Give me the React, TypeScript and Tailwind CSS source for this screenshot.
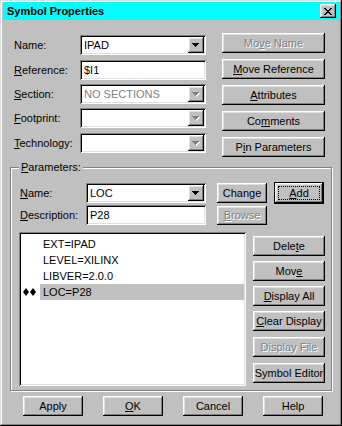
import type { ReactNode } from "react"

const raised =
  "shadow-[inset_-1px_-1px_#000,inset_1px_1px_#fff,inset_-2px_-2px_#808080,inset_2px_2px_#dfdfdf]"
const sunken =
  "shadow-[inset_1px_1px_#808080,inset_-1px_-1px_#fff,inset_2px_2px_#000,inset_-2px_-2px_#dfdfdf]"
const dim = "text-[#808080] [text-shadow:1px_1px_0_#fff]"

function U({ children }: { children: ReactNode }) {
  return <span className="underline underline-offset-[1px] decoration-1">{children}</span>
}

function Btn({
  children,
  className = "",
  disabled = false,
  isDefault = false,
}: {
  children: ReactNode
  className?: string
  disabled?: boolean
  isDefault?: boolean
}) {
  if (isDefault) {
    return (
      <div className={`border border-black ${className}`}>
        <div className={`h-full w-full ${raised} p-[3px]`}>
          <div className="flex h-full w-full items-center justify-center border border-dotted border-black">
            {children}
          </div>
        </div>
      </div>
    )
  }
  return (
    <div className={`flex items-center justify-center ${raised} ${disabled ? dim : ""} ${className}`}>
      {children}
    </div>
  )
}

function Arrow({ disabled = false }: { disabled?: boolean }) {
  return (
    <div className={`flex h-[16px] w-[16px] shrink-0 items-center justify-center bg-[#c0c0c0] ${raised}`}>
      <svg width="8" height="5" viewBox="0 0 8 5" shapeRendering="crispEdges">
        {disabled && (
          <g fill="#fff">
            <rect x="1" y="1" width="7" height="1" />
            <rect x="2" y="2" width="5" height="1" />
            <rect x="3" y="3" width="3" height="1" />
            <rect x="4" y="4" width="1" height="1" />
          </g>
        )}
        <g fill={disabled ? "#808080" : "#000"}>
          <rect x="0" y="0" width="7" height="1" />
          <rect x="1" y="1" width="5" height="1" />
          <rect x="2" y="2" width="3" height="1" />
          <rect x="3" y="3" width="1" height="1" />
        </g>
      </svg>
    </div>
  )
}

function Combo({
  value = "",
  disabled = false,
  className = "",
}: {
  value?: string
  disabled?: boolean
  className?: string
}) {
  return (
    <div className={`flex h-[20px] items-center bg-white p-[2px] ${sunken} ${className}`}>
      <span className={`flex-1 pl-[2px] ${disabled ? "text-[#808080]" : ""}`}>{value}</span>
      <Arrow disabled={disabled} />
    </div>
  )
}

function Field({ value, className = "" }: { value: string; className?: string }) {
  return (
    <div className={`flex h-[20px] items-center bg-white pl-[4px] ${sunken} ${className}`}>
      {value}
    </div>
  )
}

// two black "marked" diamonds in front of the selected parameter
function Marks() {
  return (
    <svg width="14" height="8" viewBox="0 0 14 8" fill="#000">
      <path d="M3 0 L6 4 L3 8 L0 4 Z" />
      <path d="M10 0 L13 4 L10 8 L7 4 Z" />
    </svg>
  )
}

const params = ["EXT=IPAD", "LEVEL=XILINX", "LIBVER=2.0.0", "LOC=P28"]

export default function App() {
  return (
    <div
      className="flex h-[426px] w-[342px] flex-col bg-[#c0c0c0] p-[2px] text-[11px] leading-none text-black shadow-[inset_-1px_-1px_#000,inset_1px_1px_#dfdfdf,inset_-2px_-2px_#808080,inset_2px_2px_#fff] font-['Liberation_Sans',Arial,sans-serif]"
    >
      {/* title bar */}
      <div className="mx-[1px] flex h-[18px] items-center justify-between bg-[#00ffff] pl-[4px] pr-[3px]">
        <span className="text-[11px] font-bold">Symbol Properties</span>
        <div className={`flex h-[14px] w-[16px] items-center justify-center bg-[#c0c0c0] ${raised}`}>
          <svg width="8" height="7" viewBox="0 0 8 7" shapeRendering="crispEdges" fill="#000">
            <rect x="0" y="0" width="2" height="1" />
            <rect x="6" y="0" width="2" height="1" />
            <rect x="1" y="1" width="2" height="1" />
            <rect x="5" y="1" width="2" height="1" />
            <rect x="2" y="2" width="4" height="1" />
            <rect x="3" y="3" width="2" height="1" />
            <rect x="2" y="4" width="4" height="1" />
            <rect x="1" y="5" width="2" height="1" />
            <rect x="5" y="5" width="2" height="1" />
            <rect x="0" y="6" width="2" height="1" />
            <rect x="6" y="6" width="2" height="1" />
          </svg>
        </div>
      </div>

      {/* top section */}
      <div className="mt-[13px] flex">
        <div className="ml-[12px] flex w-[192px] flex-col pt-[2px]">
          <div className="flex h-[20px] items-center">
            <span className="w-[66px]">Name:</span>
            <Combo value="IPAD" className="w-[126px]" />
          </div>
          <div className="mt-[5px] flex h-[20px] items-center">
            <span className="w-[66px]">
              <U>R</U>eference:
            </span>
            <Field value="$I1" className="w-[126px]" />
          </div>
          <div className="mt-[4px] flex h-[20px] items-center">
            <span className="w-[66px]">
              <U>S</U>ection:
            </span>
            <Combo value="NO SECTIONS" disabled className="w-[126px]" />
          </div>
          <div className="mt-[4px] flex h-[20px] items-center">
            <span className="w-[66px]">
              <U>F</U>ootprint:
            </span>
            <Combo disabled className="w-[126px]" />
          </div>
          <div className="mt-[5px] flex h-[20px] items-center">
            <span className="w-[66px]">
              <U>T</U>echnology:
            </span>
            <Combo disabled className="w-[126px]" />
          </div>
        </div>
        <div className="ml-[16px] flex flex-col gap-[6px]">
          <Btn disabled className="h-[20px] w-[103px]">
            Mo<U>v</U>e Name
          </Btn>
          <Btn className="h-[20px] w-[103px]">
            <U>M</U>ove Reference
          </Btn>
          <Btn className="h-[20px] w-[103px]">
            <U>A</U>ttributes
          </Btn>
          <Btn className="h-[20px] w-[103px]">
            Co<U>m</U>ments
          </Btn>
          <Btn className="h-[20px] w-[103px]">
            P<U>i</U>n Parameters
          </Btn>
        </div>
      </div>

      {/* parameters group */}
      <div className="relative mx-[8px] mt-[10px] h-[224px] border border-[#808080] shadow-[1px_1px_0_#fff,inset_1px_1px_0_#fff]">
        <span className="absolute -top-[6px] left-[8px] bg-[#c0c0c0] px-[2px]">
          <U>P</U>arameters:
        </span>
        <div className="mt-[14px] flex h-[22px] items-center">
          <span className="ml-[9px] w-[66px]">
            <U>N</U>ame:
          </span>
          <Combo value="LOC" className="w-[120px]" />
          <Btn className="ml-[11px] h-[20px] w-[50px]">Change</Btn>
          <Btn isDefault className="ml-[7px] h-[22px] w-[50px]">
            <U>A</U>dd
          </Btn>
        </div>
        <div className="mt-[1px] flex h-[20px] items-center">
          <span className="ml-[9px] w-[66px]">
            <U>D</U>escription:
          </span>
          <Field value="P28" className="w-[120px]" />
          <Btn disabled className="ml-[11px] h-[19px] w-[50px]">
            <U>B</U>rowse
          </Btn>
        </div>
        <div className="mt-[7px] flex">
          <div className={`ml-[8px] h-[154px] w-[227px] bg-white p-[2px] pt-[4px] ${sunken}`}>
            {params.map((p, i) => {
              const sel = i === params.length - 1
              return (
                <div key={p} className="flex h-[16px] items-center">
                  <span className="flex w-[19px] justify-start pl-[2px]">{sel && <Marks />}</span>
                  <span className={`flex h-full flex-1 items-center pl-[3px] ${sel ? "bg-[#c0c0c0]" : ""}`}>{p}</span>
                </div>
              )
            })}
          </div>
          <div className="ml-[7px] mt-[4px] flex flex-col">
            <Btn className="h-[20px] w-[72px]">
              Dele<U>t</U>e
            </Btn>
            <Btn className="mt-[5px] h-[20px] w-[72px]">
              Mov<U>e</U>
            </Btn>
            <Btn className="mt-[5px] h-[20px] w-[72px]">
              <U>D</U>isplay All
            </Btn>
            <Btn className="mt-[5px] h-[20px] w-[72px]">
              <U>C</U>lear Display
            </Btn>
            <Btn disabled className="mt-[6px] h-[20px] w-[72px]">
              Display File
            </Btn>
            <Btn className="mt-[6px] h-[20px] w-[72px]">Symbol Editor</Btn>
          </div>
        </div>
      </div>

      {/* bottom buttons */}
      <div className="ml-[21px] mt-[5px] flex gap-[20px]">
        <Btn className="h-[20px] w-[60px]">Apply</Btn>
        <Btn className="h-[20px] w-[60px]">
          <U>O</U>K
        </Btn>
        <Btn className="h-[20px] w-[60px]">Cancel</Btn>
        <Btn className="h-[20px] w-[60px]">Help</Btn>
      </div>
    </div>
  )
}
